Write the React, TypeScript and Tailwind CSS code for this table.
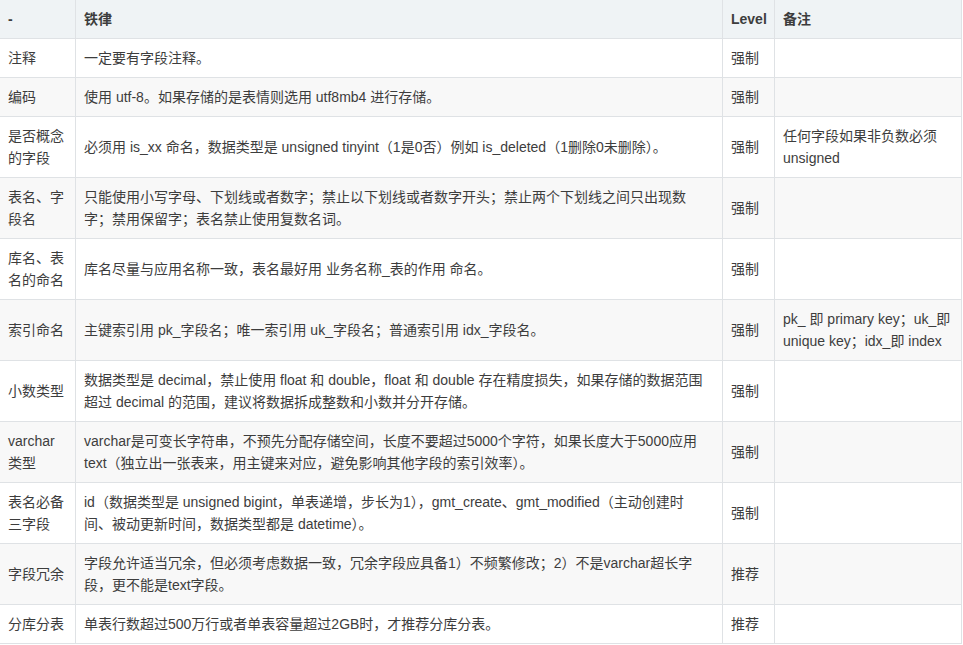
import React from 'react';

type Row = { name: string; rule: string; level: string; note?: string };

const rows: Row[] = [
  { name: '注释', rule: '一定要有字段注释。', level: '强制' },
  { name: '编码', rule: '使用 utf-8。如果存储的是表情则选用 utf8mb4 进行存储。', level: '强制' },
  {
    name: '是否概念的字段',
    rule: '必须用 is_xx 命名，数据类型是 unsigned tinyint（1是0否）例如 is_deleted（1删除0未删除）。',
    level: '强制',
    note: '任何字段如果非负数必须 unsigned',
  },
  {
    name: '表名、字段名',
    rule: '只能使用小写字母、下划线或者数字；禁止以下划线或者数字开头；禁止两个下划线之间只出现数字；禁用保留字；表名禁止使用复数名词。',
    level: '强制',
  },
  { name: '库名、表名的命名', rule: '库名尽量与应用名称一致，表名最好用 业务名称_表的作用 命名。', level: '强制' },
  {
    name: '索引命名',
    rule: '主键索引用 pk_字段名；唯一索引用 uk_字段名；普通索引用 idx_字段名。',
    level: '强制',
    note: 'pk_ 即 primary key；uk_即 unique key；idx_即 index',
  },
  {
    name: '小数类型',
    rule: '数据类型是 decimal，禁止使用 float 和 double，float 和 double 存在精度损失，如果存储的数据范围超过 decimal 的范围，建议将数据拆成整数和小数并分开存储。',
    level: '强制',
  },
  {
    name: 'varchar 类型',
    rule: 'varchar是可变长字符串，不预先分配存储空间，长度不要超过5000个字符，如果长度大于5000应用 text（独立出一张表来，用主键来对应，避免影响其他字段的索引效率）。',
    level: '强制',
  },
  {
    name: '表名必备三字段',
    rule: 'id（数据类型是 unsigned bigint，单表递增，步长为1），gmt_create、gmt_modified（主动创建时间、被动更新时间，数据类型都是 datetime）。',
    level: '强制',
  },
  {
    name: '字段冗余',
    rule: '字段允许适当冗余，但必须考虑数据一致，冗余字段应具备1）不频繁修改；2）不是varchar超长字段，更不能是text字段。',
    level: '推荐',
  },
  { name: '分库分表', rule: '单表行数超过500万行或者单表容量超过2GB时，才推荐分库分表。', level: '推荐' },
];

export default function App() {
  return (
    <div className="min-h-screen bg-white text-[14px] leading-[22px] text-[#3d3d3d] [font-family:'Liberation_Sans','Noto_Sans_CJK_SC',sans-serif]">
      <table className="border-collapse table-fixed w-[962px] -mt-px -ml-px">
        <colgroup>
          <col className="w-[76px]" />
          <col className="w-[647px]" />
          <col className="w-[52px]" />
          <col className="w-[187px]" />
        </colgroup>
        <thead>
          <tr className="bg-[#eff3f5]">
            <th className="border border-[#dfe2e5] px-2 py-2 text-left font-bold">-</th>
            <th className="border border-[#dfe2e5] px-2 py-2 text-left font-bold">铁律</th>
            <th className="border border-[#dfe2e5] px-2 py-2 text-left font-bold whitespace-nowrap">Level</th>
            <th className="border border-[#dfe2e5] px-2 py-2 text-left font-bold">备注</th>
          </tr>
        </thead>
        <tbody>
          {rows.map((r, i) => (
            <tr key={r.name} className={i % 2 === 1 ? 'bg-[#f8f8f8]' : 'bg-white'}>
              <td className="border border-[#dfe2e5] px-2 py-2">{r.name}</td>
              <td className="border border-[#dfe2e5] pl-2 pr-3 py-2">{r.rule}</td>
              <td className="border border-[#dfe2e5] px-2 py-2">{r.level}</td>
              <td className="border border-[#dfe2e5] px-2 py-2">{r.note}</td>
            </tr>
          ))}
        </tbody>
      </table>
    </div>
  );
}
